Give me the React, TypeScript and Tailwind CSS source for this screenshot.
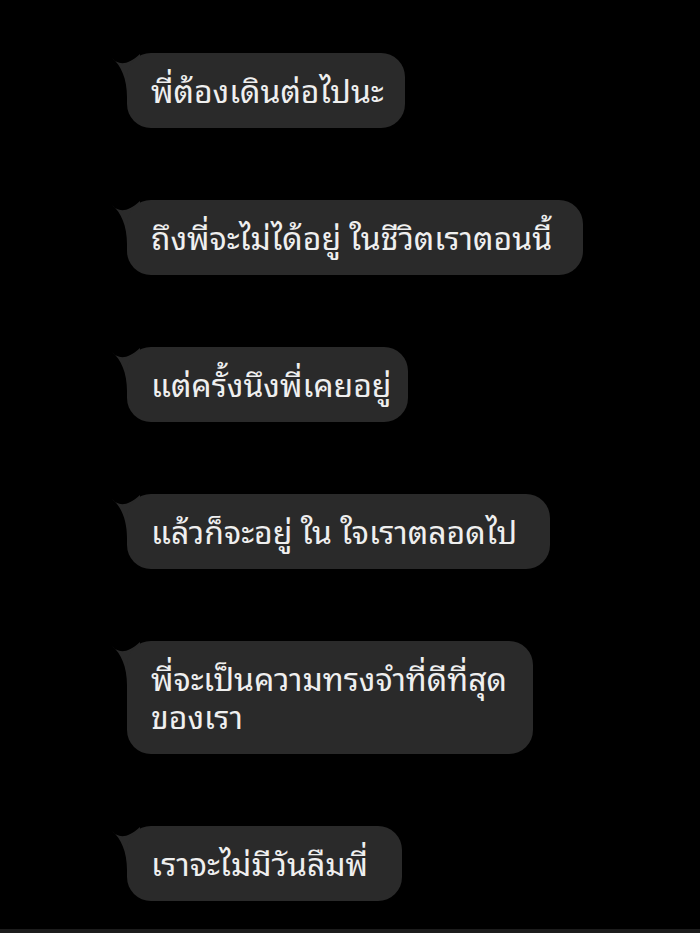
import React from "react";

type Message = {
  lines: string[];
  width: string;
};

const messages: Message[] = [
  { lines: ["พี่ต้องเดินต่อไปนะ"], width: "w-[278px]" },
  { lines: ["ถึงพี่จะไม่ได้อยู่ ในชีวิตเราตอนนี้"], width: "w-[456px]" },
  { lines: ["แต่ครั้งนึงพี่เคยอยู่"], width: "w-[281px]" },
  { lines: ["แล้วก็จะอยู่ ใน ใจเราตลอดไป"], width: "w-[423px]" },
  { lines: ["พี่จะเป็นความทรงจำที่ดีที่สุด", "ของเรา"], width: "w-[406px]" },
  { lines: ["เราจะไม่มีวันลืมพี่"], width: "w-[275px]" },
];

function Tail() {
  // หางของบับเบิล มุมบนซ้าย
  return (
    <svg
      className="absolute left-[-17px] top-0 h-[45px] w-[40px]"
      viewBox="0 0 40 45"
      aria-hidden
    >
      <path
        d="M2 5 C 8 12, 17 13, 30 1 L 30 44 L 17 44 C 17 26, 11 12, 2 5 Z"
        fill="#2a2a2a"
      />
    </svg>
  );
}

function Bubble({ msg }: { msg: Message }) {
  return (
    <div className={`relative ${msg.width}`}>
      <Tail />
      <div className="relative rounded-[24px] bg-[#2a2a2a] pl-[24px] pr-[20px] pt-[17px] pb-[20px] text-[32px] leading-[38px] text-[#efefef] whitespace-nowrap">
        {msg.lines.map((line, i) => (
          <div key={i}>{line}</div>
        ))}
      </div>
    </div>
  );
}

export default function App() {
  return (
    <div
      className="flex h-[933px] w-[700px] flex-col bg-black"
      style={{ fontFamily: '"Noto Sans Thai Looped", "Noto Sans Thai", sans-serif' }}
    >
      <div className="flex flex-1 flex-col items-start gap-[72px] pl-[127px] pt-[53px]">
        {messages.map((m, i) => (
          <Bubble key={i} msg={m} />
        ))}
      </div>
      <div className="h-[4px] bg-[#1c1c1c]" />
    </div>
  );
}
